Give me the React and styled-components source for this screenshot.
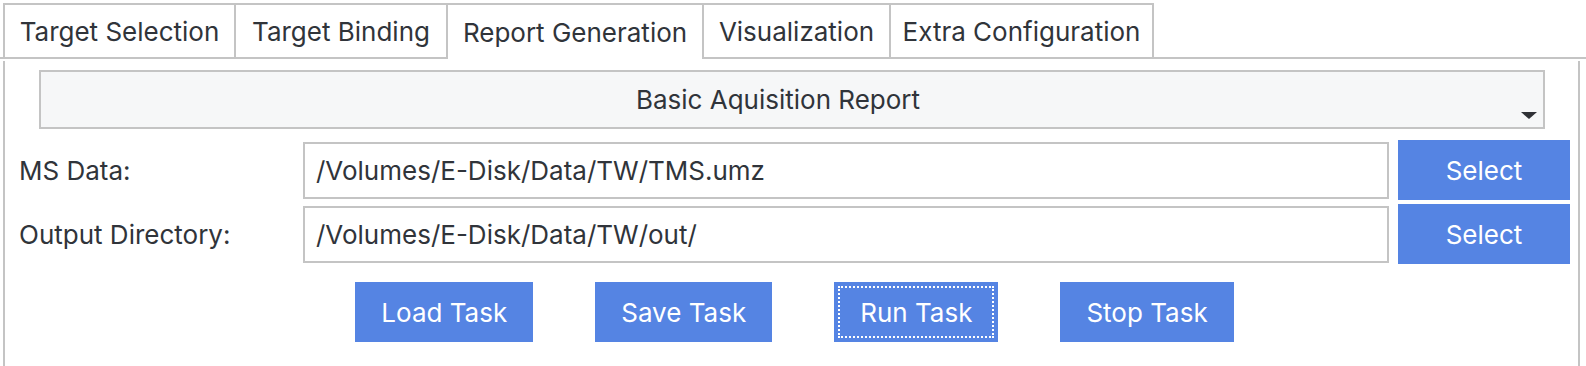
import React from "react";
import styled, { createGlobalStyle } from "styled-components";

const GlobalStyle = createGlobalStyle`
  html, body { margin: 0; padding: 0; background: #ffffff; }
  body {
    font-family: Inter, "Open Sans", "Liberation Sans", sans-serif;
    color: #30343a;
    -webkit-font-smoothing: antialiased;
  }
  * { box-sizing: border-box; }
`;

const Frame = styled.div`
  width: 1586px;
  height: 366px;
  overflow: hidden;
  background: #ffffff;
`;

const TabBar = styled.div`
  display: flex;
  align-items: flex-end;
  padding: 3px 0 0 3px;
  border-bottom: 2px solid #c4c4c4;
  height: 59px;
`;

const Tab = styled.div`
  margin-bottom: ${(p) => (p.$active ? "-2px" : "0")};
  height: ${(p) => (p.$active ? "56px" : "54px")};
  width: ${(p) => p.$w}px;
  display: flex;
  align-items: center;
  justify-content: center;
  border: 2px solid #c4c4c4;
  border-bottom: none;
  margin-left: -2px;
  &:first-child { margin-left: 0; }
  background: #ffffff;
  font-size: 26px;
  color: #30343a;
  white-space: nowrap;
  position: relative;
  z-index: ${(p) => (p.$active ? 1 : 0)};
`;

const Panel = styled.div`
  margin: 2px 6px 0 3px;
  border-left: 2px solid #c4c4c4;
  border-right: 2px solid #c4c4c4;
  padding: 9px 8px 30px 14px;
  height: 305px;
`;

const Combo = styled.div`
  position: relative;
  margin: 0 25px 0 20px;
  height: 59px;
  background: #f6f7f8;
  border: 2px solid #c4c4c4;
  display: flex;
  align-items: center;
  justify-content: center;
  padding-right: 28px;
  font-size: 26px;
  color: #30343a;
`;

const Arrow = styled.span`
  position: absolute;
  right: 6px;
  bottom: 8px;
  width: 0;
  height: 0;
  border-left: 8px solid transparent;
  border-right: 8px solid transparent;
  border-top: 7px solid #2f3136;
`;

const FormGrid = styled.div`
  margin-top: 11px;
  display: grid;
  grid-template-columns: 275px 1fr 172px;
  grid-auto-rows: 60px;
  column-gap: 9px;
  row-gap: 4px;
`;

const Label = styled.div`
  display: flex;
  align-items: center;
  font-size: 26px;
  color: #30343a;
  white-space: nowrap;
`;

const PathField = styled.div`
  align-self: center;
  height: 57px;
  border: 2px solid #c4c4c4;
  display: flex;
  align-items: center;
  padding-left: 11px;
  font-size: 26px;
  color: #30343a;
  background: #ffffff;
`;

const BlueButton = styled.button`
  border: none;
  background: #5584e3;
  color: #ffffff;
  font-family: inherit;
  font-size: 26px;
  height: 60px;
  padding: 0 26px;
  cursor: pointer;
  outline: ${(p) => (p.$focused ? "2px dotted #ffffff" : "none")};
  outline-offset: -6px;
`;

const ActionRow = styled.div`
  margin-top: 18px;
  display: flex;
  justify-content: center;
  gap: 62px;
`;

const tabs = [
  { label: "Target Selection", w: 233 },
  { label: "Target Binding", w: 214 },
  { label: "Report Generation", w: 258 },
  { label: "Visualization", w: 189 },
  { label: "Extra Configuration", w: 265 },
];

const rows = [
  { label: "MS Data:", value: "/Volumes/E-Disk/Data/TW/TMS.umz" },
  { label: "Output Directory:", value: "/Volumes/E-Disk/Data/TW/out/" },
];

const actions = ["Load Task", "Save Task", "Run Task", "Stop Task"];

export default function App() {
  return (
    <Frame>
      <GlobalStyle />
      <TabBar>
        {tabs.map((t, i) => (
          <Tab key={t.label} $w={t.w} $active={i === 2}>
            {t.label}
          </Tab>
        ))}
      </TabBar>
      <Panel>
        <Combo>
          Basic Aquisition Report
          <Arrow />
        </Combo>
        <FormGrid>
          {rows.map((r) => (
            <React.Fragment key={r.label}>
              <Label>{r.label}</Label>
              <PathField>{r.value}</PathField>
              <BlueButton>Select</BlueButton>
            </React.Fragment>
          ))}
        </FormGrid>
        <ActionRow>
          {actions.map((a) => (
            <BlueButton key={a} $focused={a === "Run Task"}>
              {a}
            </BlueButton>
          ))}
        </ActionRow>
      </Panel>
    </Frame>
  );
}
